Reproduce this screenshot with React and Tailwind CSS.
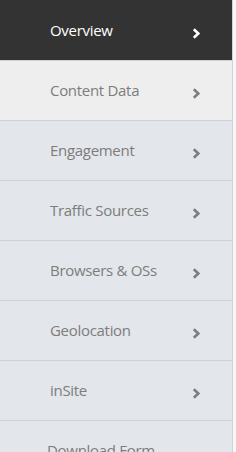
const items = [
  { label: 'Overview', active: true },
  { label: 'Content Data', hover: true },
  { label: 'Engagement' },
  { label: 'Traffic Sources' },
  { label: 'Browsers & OSs' },
  { label: 'Geolocation' },
  { label: 'inSite' },
];

function Chevron({ color }) {
  return (
    <svg width="9" height="11" viewBox="0 0 9 11" className="mt-[6px]">
      <path d="M1.8 1.3 L6.3 5.5 L1.8 9.7" fill="none" stroke={color} strokeWidth="2.6" />
    </svg>
  );
}

export default function App() {
  return (
    <div className="flex w-[236px] h-[452px] overflow-hidden bg-[#f7f7f7]" style={{ fontFamily: '"Open Sans", Lato, sans-serif' }}>
      <div className="w-[233px] shrink-0 border-r border-[#cfd2d6] bg-[#e3e6ea]">
        {items.map((item) => (
          <div
            key={item.label}
            className={
              'flex items-center h-[60px] pl-[50px] pr-[31px] border-t ' +
              (item.active
                ? 'bg-[#333333] border-[#333333] text-white'
                : item.hover
                ? 'bg-[#eeeeee] border-[#cdd0d4] text-[#7d7d7d]'
                : 'bg-[#e3e6ea] border-[#cdd0d4] text-[#7d7d7d]')
            }
          >
            <span className="flex-1 text-[15px] leading-none tracking-[-0.3px]">{item.label}</span>
            <Chevron color={item.active ? '#ffffff' : '#7d7d7d'} />
          </div>
        ))}
        <div className="border-t border-[#cdd0d4] pt-[22px] pl-[47px] text-[15px] leading-none tracking-[-0.3px] text-[#7d7d7d]">Download Form</div>
      </div>
    </div>
  );
}
